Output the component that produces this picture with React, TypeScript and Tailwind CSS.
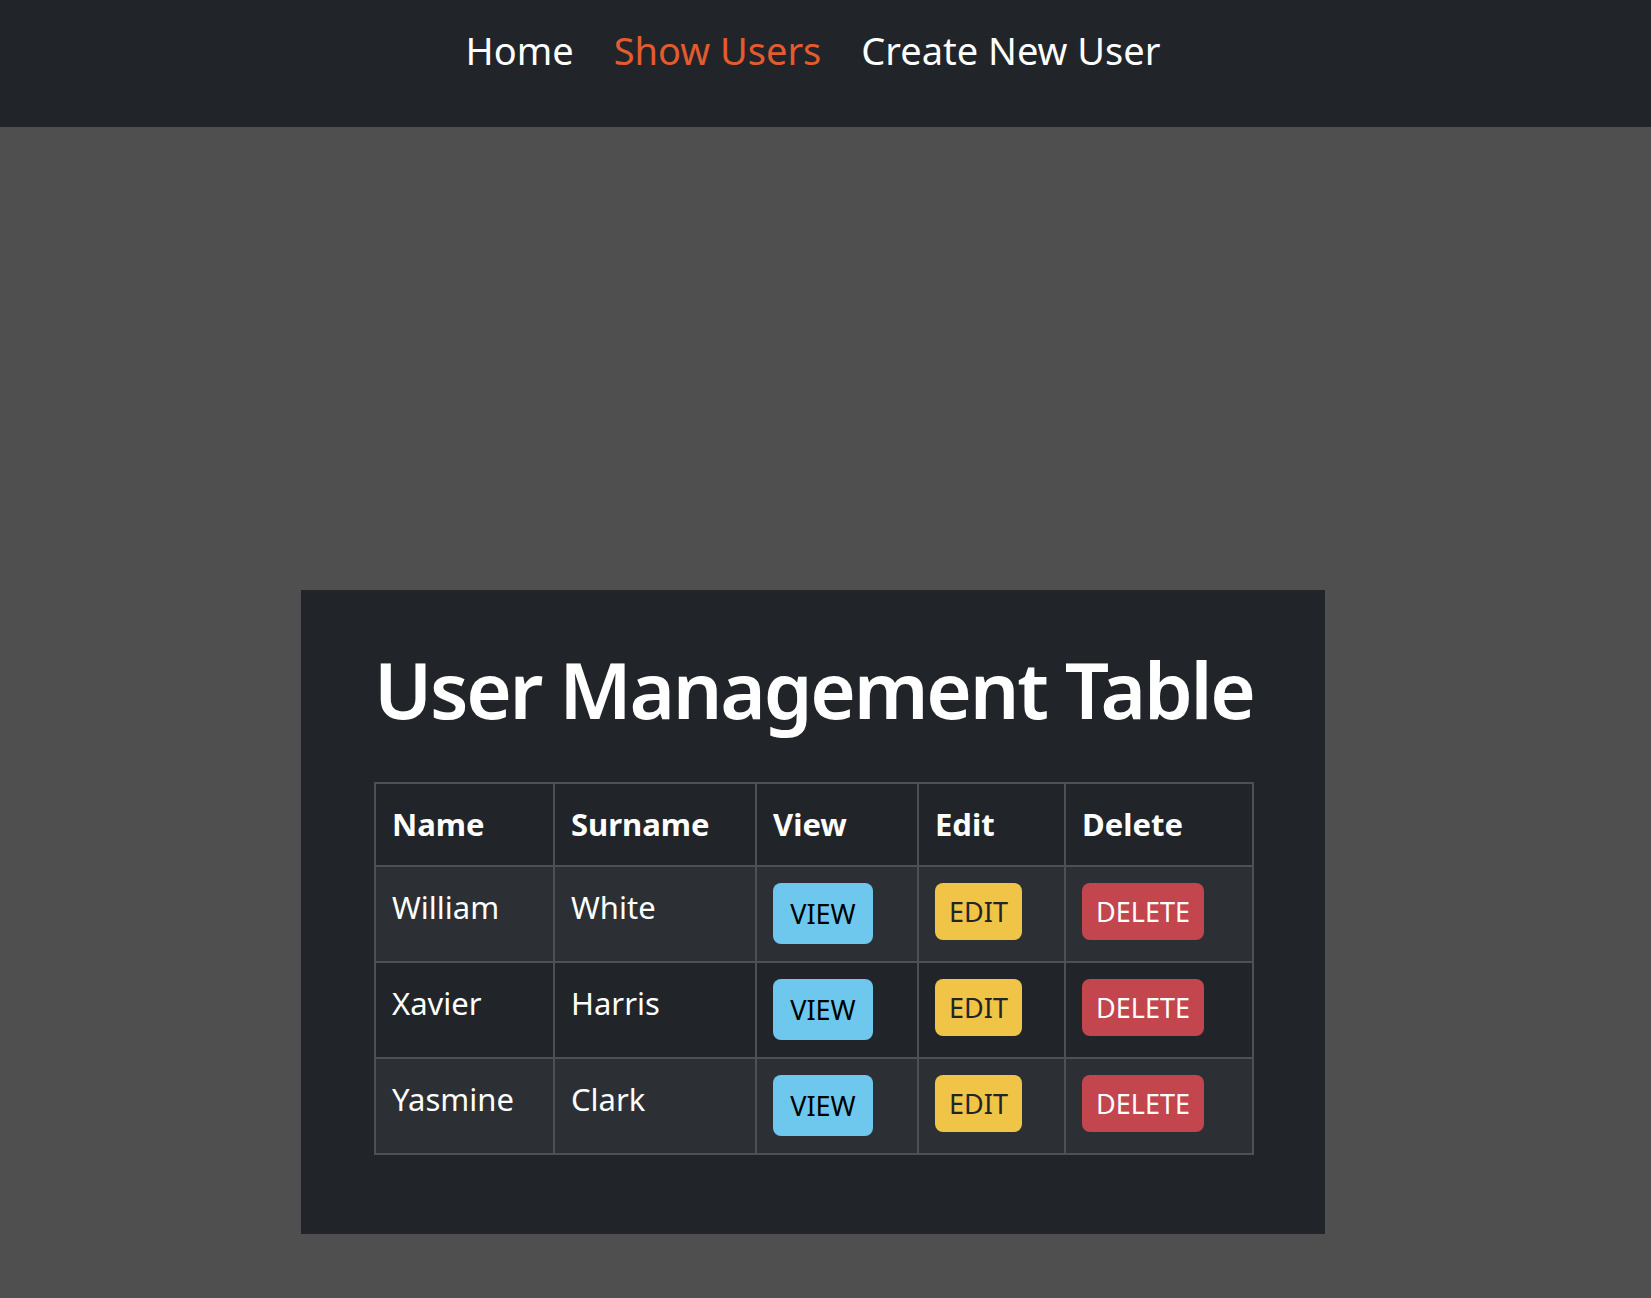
import React from 'react'

type User = { id: number; name: string; surname: string }

const users: User[] = [
  { id: 1, name: 'William', surname: 'White' },
  { id: 2, name: 'Xavier', surname: 'Harris' },
  { id: 3, name: 'Yasmine', surname: 'Clark' },
]

const navLinks = [
  { label: 'Home', active: false },
  { label: 'Show Users', active: true },
  { label: 'Create New User', active: false },
]

function NavBar() {
  return (
    <nav className="h-[127px] bg-[#212529]">
      <ul className="flex justify-center gap-[40px] pr-[25px] pt-[21px] text-[38px] leading-[58px]">
        {navLinks.map((link) => (
          <li key={link.label}>
            <a href="#" className={link.active ? 'text-[#e35b2e]' : 'text-white'}>
              {link.label}
            </a>
          </li>
        ))}
      </ul>
    </nav>
  )
}

function UserTable() {
  const cell = 'border-2 border-[#4d5154] px-4 pt-4 align-top'
  return (
    <table className="w-[878px] table-fixed border-collapse text-[31px] leading-[48px] text-white">
      <colgroup>
        <col className="w-[179px]" />
        <col className="w-[202px]" />
        <col className="w-[162px]" />
        <col className="w-[147px]" />
        <col className="w-[188px]" />
      </colgroup>
      <thead>
        <tr className="h-[83px] bg-[#212529] text-left font-bold">
          <th className={cell}>Name</th>
          <th className={cell}>Surname</th>
          <th className={cell}>View</th>
          <th className={cell}>Edit</th>
          <th className={cell}>Delete</th>
        </tr>
      </thead>
      <tbody>
        {users.map((user, i) => (
          <tr key={user.id} className={`h-[96px] ${i % 2 === 0 ? 'bg-[#2c3034]' : 'bg-[#212529]'}`}>
            <td className={cell}>{user.name}</td>
            <td className={cell}>{user.surname}</td>
            <td className={cell}>
              <button className="flex h-[61px] w-[100px] items-center justify-center rounded-[8px] bg-[#6ec8ee] text-[27px] leading-[42px] text-black">
                VIEW
              </button>
            </td>
            <td className={cell}>
              <button className="flex h-[57px] w-[87px] items-center justify-center rounded-[8px] bg-[#f0c446] text-[27px] leading-[42px] text-[#212529]">
                EDIT
              </button>
            </td>
            <td className={cell}>
              <button className="flex h-[57px] w-[122px] items-center justify-center rounded-[8px] bg-[#c3464f] text-[27px] leading-[42px] text-white">
                DELETE
              </button>
            </td>
          </tr>
        ))}
      </tbody>
    </table>
  )
}

export default function App() {
  return (
    <div className="min-h-screen bg-[#4f4f4f] font-['Noto_Sans',sans-serif]">
      <NavBar />
      <main className="flex justify-center pr-[25px] pt-[463px] pb-[64px]">
        <section className="h-[644px] w-[1024px] bg-[#212529] pt-[51px]">
          <div className="mx-auto w-[878px]">
            <h1 className="whitespace-nowrap text-center text-[78px] font-semibold leading-[96px] tracking-[-2.25px] text-white">
              User Management Table
            </h1>
            <div className="mt-[45px]">
              <UserTable />
            </div>
          </div>
        </section>
      </main>
    </div>
  )
}
